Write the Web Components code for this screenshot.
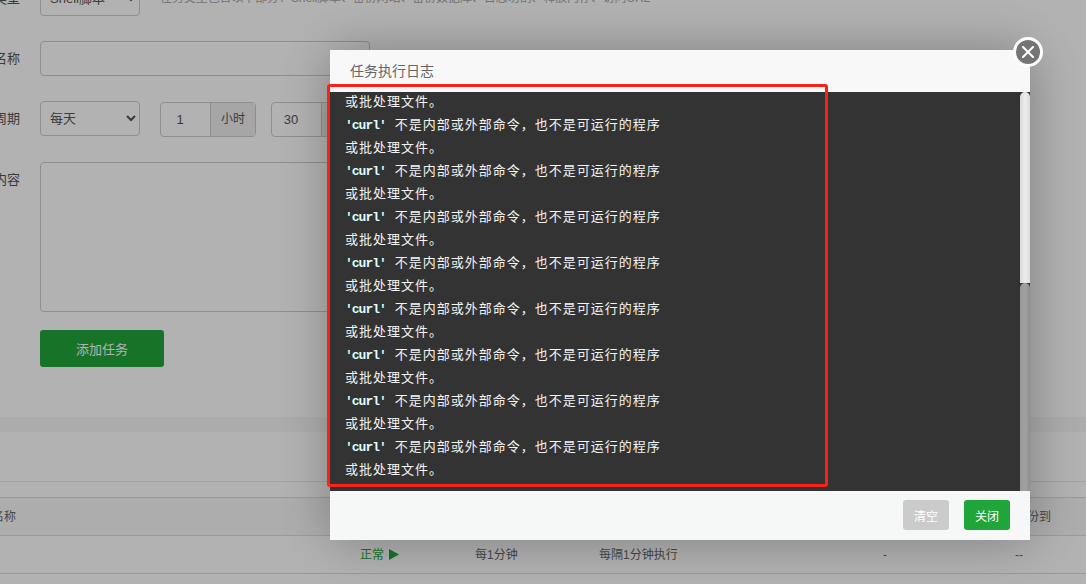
<!DOCTYPE html>
<html>
<head>
<meta charset="utf-8">
<title>任务执行日志</title>
<style>
  html, body { margin: 0; height: 100%; overflow: hidden; background: #fff; }
  body { font: 12px "Liberation Sans", "Noto Sans CJK SC", sans-serif; color: #666; }
</style>
</head>
<body>
<task-form></task-form>
<task-table></task-table>
<log-dialog title="任务执行日志"></log-dialog>
<mark-box></mark-box>

<script>
(function() {
    // page behind the dialog, it is scrolled down a bit so the first row gets cut
    let formTmpl = document.createElement("template");
    formTmpl.innerHTML = `
    <style>
      :host { display: block; margin: -19px 0 0 -40px; height: 436px; }
      .row { display: flex; margin-bottom: 25px; }
      label { width: 60px; margin-right: 20px; line-height: 35px; text-align: right; font-size: 13px; color: #555; flex: none; }
      select, input, textarea { box-sizing: border-box; border: 1px solid #ccc; border-radius: 4px; background: #fff; color: #555; font: inherit; font-size: 13px; }
      select { width: 100px; height: 35px; padding-left: 5px; }
      .name { width: 330px; height: 35px; }
      .hint { margin-left: 20px; line-height: 35px; color: #a6a6a6; letter-spacing: -.1px; white-space: nowrap; }
      .group { display: flex; height: 35px; margin: 1px 15px 0 0; box-sizing: border-box; border: 1px solid #ccc; border-radius: 4px; }
      .group:first-of-type { margin-left: 20px; }
      .group span { width: 49px; line-height: 33px; padding-right: 11px; box-sizing: border-box; text-align: center; font-size: 13px; color: #555; }
      .group i { width: 44px; border-left: 1px solid #ccc; background: #eee; line-height: 33px; text-align: center; font-style: normal; font-size: 12px; color: #555; }
      textarea { display: block; width: 640px; height: 150px; resize: none; }
      .content { margin-bottom: 18px; }
      button { display: block; margin-left: 80px; width: 124px; height: 37px; border: 0; border-radius: 3px; background: #20a53a; color: #fff; font: inherit; font-size: 13px; }
    </style>
    <div class="row"><label>类型</label><select><option>Shell脚本</option></select><span class="hint">任务类型包含以下部分：Shell脚本、备份网站、备份数据库、日志切割、释放内存、访问URL</span></div>
    <div class="row"><label>名称</label><input class="name"></div>
    <div class="row">
      <label>周期</label><select><option>每天</option></select>
      <div class="group"><span>1</span><i>小时</i></div>
      <div class="group"><span>30</span><i></i></div>
    </div>
    <div class="row content"><label>内容</label><textarea></textarea></div>
    <button>添加任务</button>
    `;

    class TaskForm extends HTMLElement {
        constructor() {
            super();
            this.attachShadow({mode: "open"}).appendChild(formTmpl.content.cloneNode(true));
        }
    }
    customElements.define("task-form", TaskForm);

    let tableTmpl = document.createElement("template");
    tableTmpl.innerHTML = `
    <style>
      :host { display: block; }
      .band { height: 15px; background: #f7f7f7; }
      .tabs { height: 49px; border-bottom: 1px solid #e8e8e8; }
      .gap { height: 15px; }
      .tr { display: grid; grid-template-columns: 360px 115px 124px 284px 132px 1fr; height: 37px; line-height: 37px; border-top: 1px solid #ddd; white-space: nowrap; }
      .th { background: #f8f8f8; line-height: 38px; }
      .tr.last { border-bottom: 1px solid #ddd; line-height: 39px; }
      .name { margin-left: -32px; }
      .ok { color: #20a53a; }
      svg { vertical-align: -1px; margin-left: 2px; }
    </style>
    <div class="band"></div>
    <div class="tabs"></div>
    <div class="gap"></div>
    <div class="tr th"><span class="name">任务名称</span><span></span><span></span><span></span><span></span><span>备份到</span></div>
    <div class="tr last"><span></span><span class="ok">正常 <svg width="10" height="11" viewBox="0 0 10 11"><path d="M0 0L10 5.5L0 11z" fill="#20a53a"/></svg></span><span>每1分钟</span><span>每隔1分钟执行</span><span>-</span><span>--</span></div>
    `;

    class TaskTable extends HTMLElement {
        constructor() {
            super();
            this.attachShadow({mode: "open"}).appendChild(tableTmpl.content.cloneNode(true));
        }
    }
    customElements.define("task-table", TaskTable);

    let dialogTmpl = document.createElement("template");
    dialogTmpl.innerHTML = `
    <style>
      :host { position: fixed; inset: 0; display: block; background: rgba(0,0,0,.3); }
      .box { position: absolute; left: 330px; top: 50px; width: 700px; height: 490px; display: flex; flex-direction: column; box-shadow: 1px 1px 50px rgba(0,0,0,.3); }
      header { height: 42px; flex: none; padding-left: 20px; background: #f8f8f8; line-height: 42px; font-size: 14px; color: #666; }
      .body { flex: 1; min-height: 0; display: flex; background: #333; }
      .log { flex: 1; overflow: hidden; padding-left: 15px; margin-top: -1px; }
      .rail { width: 10px; flex: none; display: flex; flex-direction: column; }
      .rail .up { height: 191px; flex: none; border-radius: 5px 5px 0 0; background: linear-gradient(90deg, #d8d8d8, #ececec 50%, #dcdcdc); }
      .rail .down { flex: 1; border-radius: 5px 5px 0 0; background: linear-gradient(90deg, #9a9a9a, #a0a0a0 60%, #8c8c8c); }
      footer { height: 49px; flex: none; box-sizing: border-box; padding: 9px 20px 0 0; display: flex; justify-content: flex-end; gap: 15px; background: #f6f8f8; }
      button { width: 46px; height: 30px; border: 0; border-radius: 3px; padding: 0; color: #fff; font: inherit; font-size: 12px; }
      .clear { background: #cbcbcb; }
      .close { background: #20a53a; }
      .x { position: absolute; right: -13px; top: -13px; width: 30px; height: 30px; box-sizing: border-box; border: 3px solid #fff; border-radius: 50%; background: #757575; display: flex; align-items: center; justify-content: center; }
    </style>
    <div class="box">
      <header></header>
      <div class="body">
        <div class="log"><slot></slot></div>
        <div class="rail"><div class="up"></div><div class="down"></div></div>
      </div>
      <footer><button class="clear">清空</button><button class="close">关闭</button></footer>
      <div class="x"><svg width="12" height="12" viewBox="0 0 12 12"><path d="M1 1L11 11M11 1L1 11" stroke="#fff" stroke-width="2" stroke-linecap="round"/></svg></div>
    </div>
    `;

    class LogDialog extends HTMLElement {
        constructor() {
            super();
            this.attachShadow({mode: "open"}).appendChild(dialogTmpl.content.cloneNode(true));
            this.shadowRoot.querySelector("header").textContent = this.getAttribute("title");
        }
    }
    customElements.define("log-dialog", LogDialog);

    let lineTmpl = document.createElement("template");
    lineTmpl.innerHTML = `
    <style>
      :host { display: block; height: 23px; font: 13px/23px "Liberation Mono", "Noto Sans CJK SC", monospace; letter-spacing: 1px; color: #f4f4f4; white-space: nowrap; }
      b { letter-spacing: -1px; color: #dff; }
      b:empty { display: none; }
    </style>
    <b></b> <slot></slot>
    `;

    class LogLine extends HTMLElement {
        constructor() {
            super();
            this.attachShadow({mode: "open"}).appendChild(lineTmpl.content.cloneNode(true));
        }
        set cmd(v) {
            this.shadowRoot.querySelector("b").textContent = v;
        }
    }
    customElements.define("log-line", LogLine);

    // the red frame somebody drew on the screenshot
    let markTmpl = document.createElement("template");
    markTmpl.innerHTML = `
    <style>
      :host { position: fixed; left: 327px; top: 84px; width: 501px; height: 403px; box-sizing: border-box; border: 3px solid #fb2116; border-radius: 3px; display: block; }
    </style>
    `;

    class MarkBox extends HTMLElement {
        constructor() {
            super();
            this.attachShadow({mode: "open"}).appendChild(markTmpl.content.cloneNode(true));
        }
    }
    customElements.define("mark-box", MarkBox);

    let dialog = document.querySelector("log-dialog");
    function addLine(text, cmd) {
        let l = document.createElement("log-line");
        l.textContent = text;
        if (cmd) l.cmd = cmd;
        dialog.appendChild(l);
    }
    for (let i = 0; i < 9; i++) {
        addLine("或批处理文件。");
        if (i < 8) addLine("不是内部或外部命令，也不是可运行的程序", "'curl'");
    }
})();
</script>
</body>
</html>
